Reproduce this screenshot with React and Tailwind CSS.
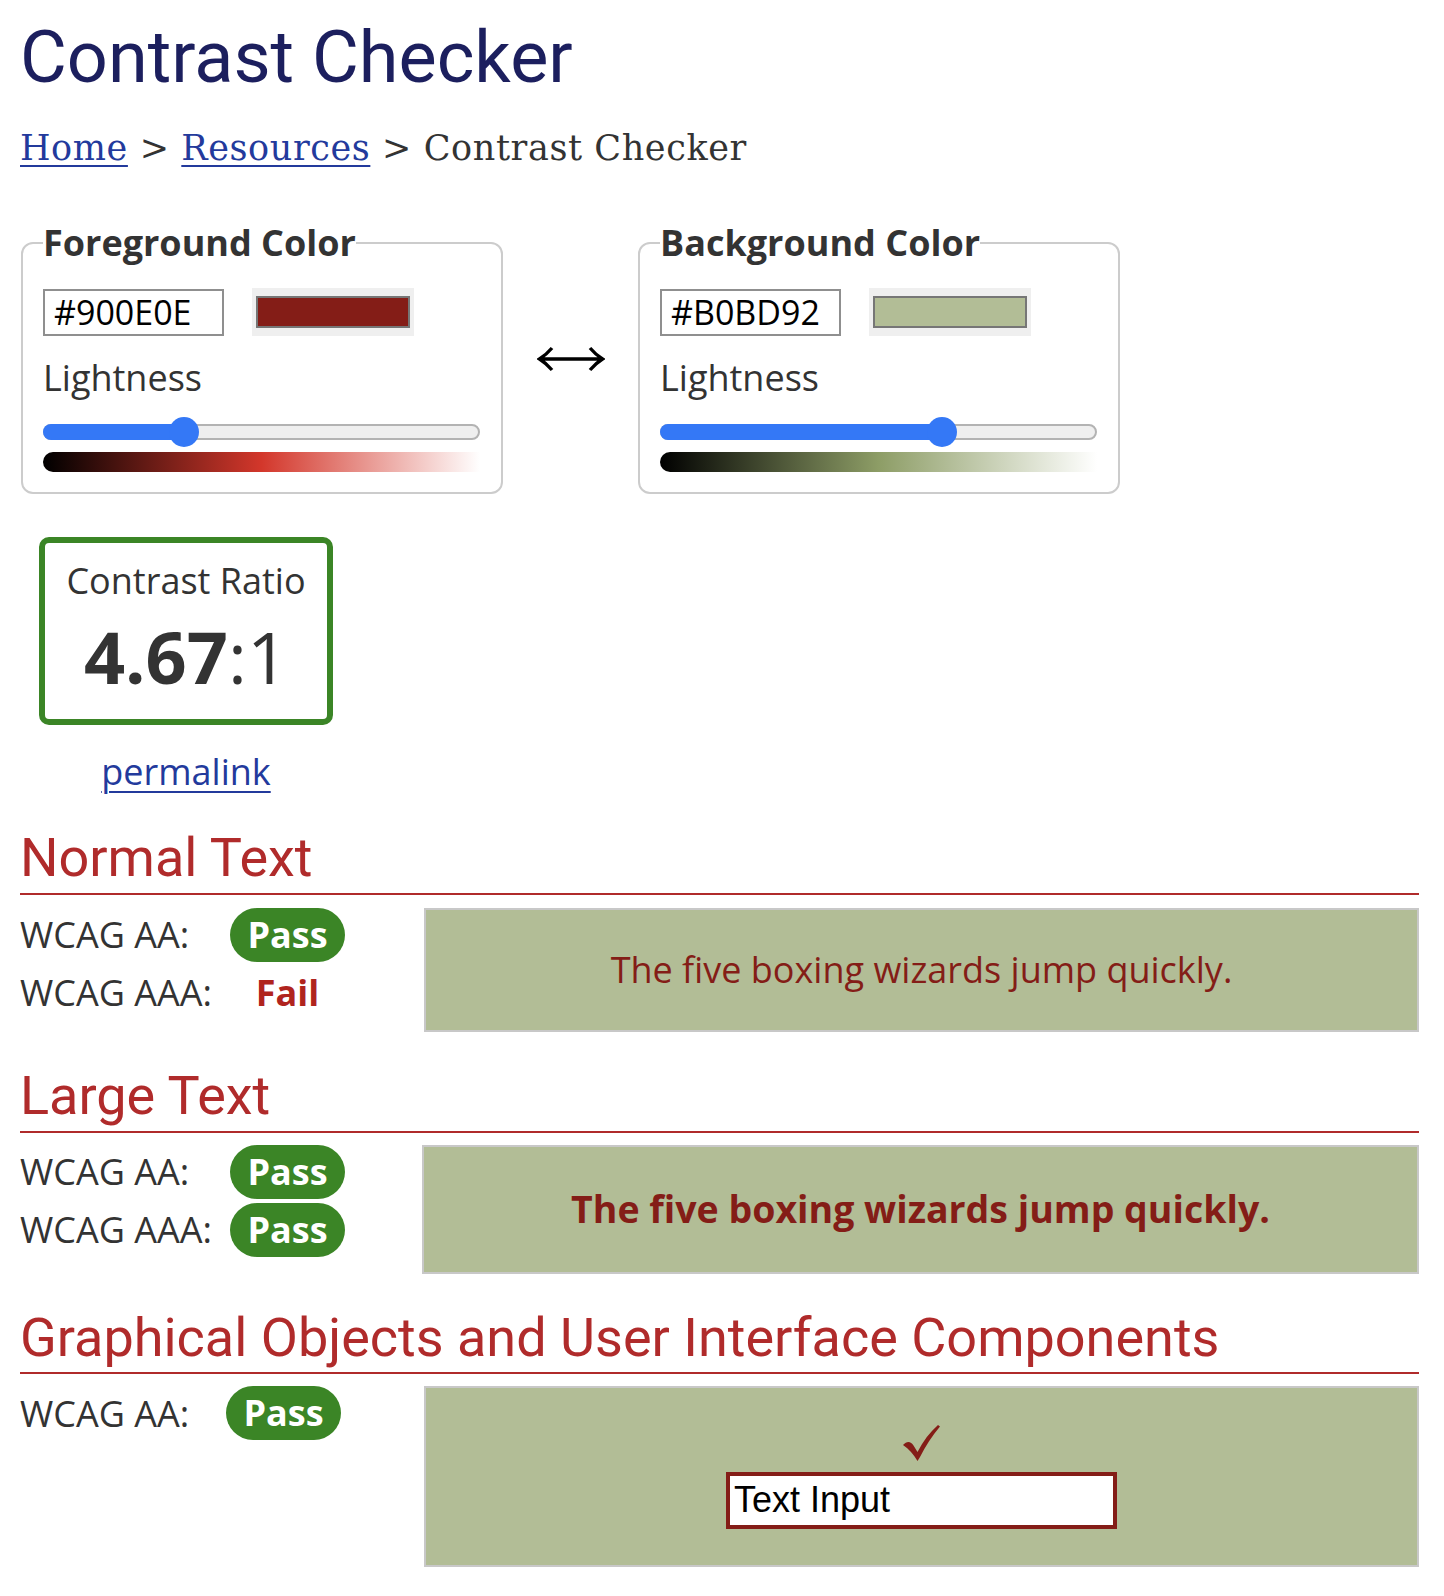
import React from "react";

const colors = [
  {
    title: "Foreground Color",
    hex: "#900E0E",
    swatch: "bg-[#841d17]",
    pct: 0.31,
    grad: "bg-[linear-gradient(to_right,#000_0%,#d3372b_50%,#fff_100%)]",
  },
  {
    title: "Background Color",
    hex: "#B0BD92",
    swatch: "bg-[#b2bd96]",
    pct: 0.657,
    grad: "bg-[linear-gradient(to_right,#000_0%,#8d9d66_50%,#fff_100%)]",
  },
];

const TRACK = 437;
const THUMB = 30;

function Slider({ pct }) {
  const left = Math.round(pct * (TRACK - THUMB));
  return (
    <div className="relative h-[30px] mt-[15px]">
      <div className="absolute left-0 right-0 top-[7px] h-[16px] rounded-full bg-[#efefef] border-2 border-[#b3b3b3]" />
      <div
        className="absolute left-0 top-[7px] h-[16px] rounded-full bg-[#3478f6]"
        style={{ width: left + THUMB / 2 }}
      />
      <div
        className="absolute top-0 h-[30px] w-[30px] rounded-full bg-[#3478f6]"
        style={{ left }}
      />
    </div>
  );
}

function ColorBox({ c }) {
  return (
    <fieldset className="w-[482px] border-2 border-[#cccccc] rounded-[12px] pl-[20px] pr-[21px] pb-[20px]">
      <legend className="text-[36px] leading-[49px] font-bold text-[#333]">{c.title}</legend>
      <div className="flex items-center gap-[28px] mt-[21px]">
        <div className="w-[181px] h-[47px] border-2 border-[#8f8f8f] pl-[9px] flex items-center text-[34px] text-black leading-none">
          {c.hex}
        </div>
        <div className="w-[162px] h-[48px] bg-[#efefef] px-[4px] py-[8px]">
          <div className={`w-full h-full border-2 border-[#767676] ${c.swatch}`} />
        </div>
      </div>
      <div className="text-[36px] leading-[49px] text-[#333] mt-[17px]">Lightness</div>
      <Slider pct={c.pct} />
      <div className={`h-[20px] mt-[5px] rounded-l-[10px] ${c.grad}`} />
    </fieldset>
  );
}

function Arrow() {
  return (
    <svg width="68" height="26" viewBox="0 0 68 26">
      <path
        d="M3 13H65M15 2Q9 9 2.5 13Q9 17 15 24M53 2Q59 9 65.5 13Q59 17 53 24"
        stroke="#000"
        strokeWidth="3.4"
        fill="none"
      />
    </svg>
  );
}

function Badge({ result }) {
  if (result === "Pass") {
    return (
      <div className="w-[115px] h-[54px] rounded-full bg-[#3b8526] text-white font-bold text-[36px] flex items-center justify-center leading-none">
        Pass
      </div>
    );
  }
  return (
    <div className="w-[115px] h-[54px] text-[#b0241e] font-bold text-[36px] flex items-center justify-center leading-none">
      Fail
    </div>
  );
}

function Results({ rows, labelW }) {
  return (
    <div className="flex flex-col gap-[4px]">
      {rows.map(([label, res]) => (
        <div key={label} className="flex items-center h-[54px]">
          <div className={`${labelW} text-[36px] leading-[49px] text-[#333]`}>{label}</div>
          <Badge result={res} />
        </div>
      ))}
    </div>
  );
}

function Heading({ children, className }) {
  return (
    <h2
      className={`font-['Roboto',sans-serif] text-[54px] leading-[1.2] font-normal text-[#b02b2b] border-b-2 border-[#b02b2b] pb-[2px] ${className}`}
    >
      {children}
    </h2>
  );
}

function Check() {
  return (
    <svg width="37" height="36" viewBox="0 0 37 36">
      <path
        d="M0 20C4 15.5 8 16.5 10.5 20.5L14.5 27C20 16 27 7 35 0L37 1.5C29 11 22.5 21 17 32L14.5 36C10.5 29.5 6 24 0 20Z"
        fill="#841d17"
      />
    </svg>
  );
}

export default function App() {
  return (
    <div className="min-h-[1596px] bg-white pl-[20px] pr-[25px] font-['Open_Sans',sans-serif] text-[#333]">
      <h1 className="font-['Roboto',sans-serif] text-[72px] leading-[86px] font-normal text-[#1c1f5e] pt-[15px]">
        Contrast Checker
      </h1>
      <nav className="font-['DejaVu_Serif',serif] text-[35px] tracking-[0.6px] leading-[40px] mt-[27px] text-[#333]">
        <a href="#" className="text-[#233a9c] underline decoration-2 underline-offset-[5px]">Home</a>
        {" > "}
        <a href="#" className="text-[#233a9c] underline decoration-2 underline-offset-[5px]">Resources</a>
        {" > Contrast Checker"}
      </nav>

      <div className="flex items-center mt-[50px] ml-[1px]">
        <ColorBox c={colors[0]} />
        <div className="w-[135px] flex justify-center mt-[6px]">
          <Arrow />
        </div>
        <ColorBox c={colors[1]} />
      </div>

      <div className="w-[294px] ml-[19px] mt-[43px] text-center">
        <div className="border-[6px] border-[#3b8526] rounded-[10px] pt-[13px] pb-[14px]">
          <div className="text-[36px] leading-[49px] text-[#333]">Contrast Ratio</div>
          <div className="text-[72px] leading-[98px] mt-[2px] text-[#333]">
            <span className="font-bold">4.67</span>:1
          </div>
        </div>
        <a
          href="#"
          className="inline-block mt-[22px] text-[36px] leading-[49px] text-[#233a9c] underline decoration-2 underline-offset-[6px]"
        >
          permalink
        </a>
      </div>

      <Heading className="mt-[30px]">Normal Text</Heading>
      <div className="flex items-start mt-[13px]">
        <div className="w-[404px]">
          <Results rows={[["WCAG AA:", "Pass"], ["WCAG AAA:", "Fail"]]} labelW="w-[210px]" />
        </div>
        <div className="flex-1 h-[124px] border-2 border-[#c8c8c8] bg-[#b2bd96] flex items-center justify-center text-[36px] text-[#841d17]">
          The five boxing wizards jump quickly.
        </div>
      </div>

      <Heading className="mt-[32px]">Large Text</Heading>
      <div className="flex items-start mt-[12px]">
        <div className="w-[402px]">
          <Results rows={[["WCAG AA:", "Pass"], ["WCAG AAA:", "Pass"]]} labelW="w-[210px]" />
        </div>
        <div className="flex-1 h-[129px] border-2 border-[#c8c8c8] bg-[#b2bd96] flex items-center justify-center text-[37.5px] font-bold text-[#841d17]">
          The five boxing wizards jump quickly.
        </div>
      </div>

      <Heading className="mt-[32px]">Graphical Objects and User Interface Components</Heading>
      <div className="flex items-start mt-[12px]">
        <div className="w-[404px]">
          <Results rows={[["WCAG AA:", "Pass"]]} labelW="w-[206px]" />
        </div>
        <div className="flex-1 h-[181px] border-2 border-[#c8c8c8] bg-[#b2bd96] flex flex-col items-center justify-center gap-[11px]">
          <Check />
          <div className="w-[391px] h-[57px] border-4 border-[#841d17] bg-white pl-[4px] flex items-center font-['Liberation_Sans',sans-serif] text-[36px] text-black leading-none">
            Text Input
          </div>
        </div>
      </div>
    </div>
  );
}
